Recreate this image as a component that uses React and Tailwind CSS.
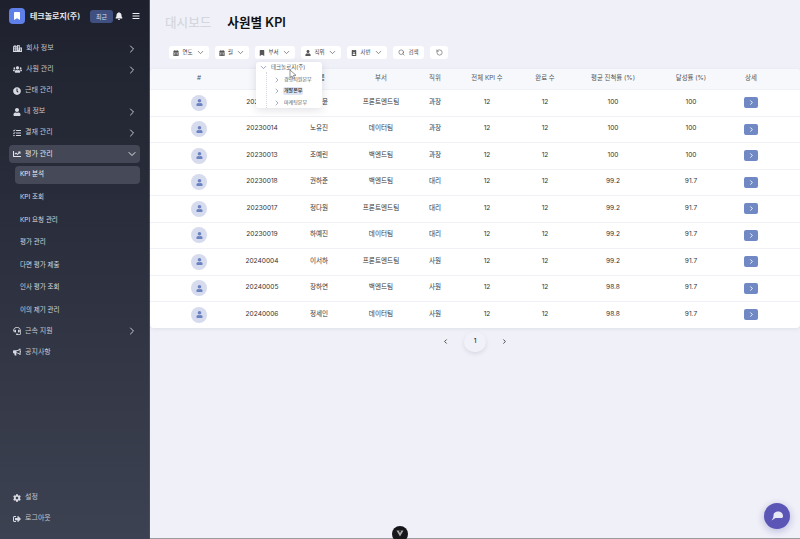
import React from 'react';
import { ChevronDown, ChevronRight, ChevronLeft, RotateCcw, Search } from 'lucide-react';
import {
  FaBell, FaBars, FaBookmark, FaCity, FaUsers, FaClock, FaUser, FaTasks, FaChartLine,
  FaHeadset, FaBullhorn, FaCog, FaSignOutAlt, FaCalendarAlt, FaIdBadge,
} from 'react-icons/fa';

const topMenu = [
  { label: '회사 정보', icon: FaCity, arrow: true, pad: 'gap-[4px]', size: 9 },
  { label: '사원 관리', icon: FaUsers, arrow: true, pad: 'gap-[4px]', size: 9 },
  { label: '근태 관리', icon: FaClock, arrow: false, pad: 'gap-[4px]', size: 8 },
  { label: '내 정보', icon: FaUser, arrow: true, pad: 'gap-[3px]', size: 8 },
  { label: '결재 관리', icon: FaTasks, arrow: true, pad: 'gap-[4px]', size: 8 },
];

const subMenu = ['KPI 분석', 'KPI 조회', 'KPI 요청 관리', '평가 관리', '다면 평가 제출', '인사 평가 조회', '이의 제기 관리'];

const filters = [
  { label: '연도', icon: FaCalendarAlt, width: 'w-10' },
  { label: '월', icon: FaCalendarAlt, width: 'w-[34px]' },
  { label: '부서', icon: FaBookmark, width: 'w-10' },
  { label: '직위', icon: FaUser, width: 'w-10' },
  { label: '사번', icon: FaIdBadge, width: 'w-10' },
];

const rows = [
  ['20230012', '김도윤', '프론트엔드팀', '과장', '12', '12', '100', '100'],
  ['20230014', '노유진', '데이터팀', '과장', '12', '12', '100', '100'],
  ['20230013', '조예린', '백엔드팀', '과장', '12', '12', '100', '100'],
  ['20230018', '권하준', '백엔드팀', '대리', '12', '12', '99.2', '91.7'],
  ['20230017', '정다원', '프론트엔드팀', '대리', '12', '12', '99.2', '91.7'],
  ['20230019', '하예진', '데이터팀', '대리', '12', '12', '99.2', '91.7'],
  ['20240004', '이서하', '프론트엔드팀', '사원', '12', '12', '99.2', '91.7'],
  ['20240005', '장하연', '백엔드팀', '사원', '12', '12', '98.8', '91.7'],
  ['20240006', '정세인', '데이터팀', '사원', '12', '12', '98.8', '91.7'],
];

const headers = ['사번', '이름', '부서', '직위', '전체 KPI 수', '완료 수', '평균 진척률 (%)', '달성률 (%)', '상세'];

const gridCols = 'grid grid-cols-[80px_64px_50px_74px_34px_70px_46px_90px_66px_54px] pr-[22px] items-center';

function MenuRow({ item }) {
  const Icon = item.icon;
  return (
    <div className="h-[21px] flex items-center pl-[13px] pr-[11px]">
      <div className={`flex items-center flex-1 ${item.pad}`}>
        <Icon size={item.size} className="text-[#d8dae2]" />
        <span className="text-[7px] text-[#c3c6d0]">{item.label}</span>
      </div>
      {item.arrow && <ChevronRight size={12} className="text-[#c9ccd6]" />}
    </div>
  );
}

function Sidebar() {
  return (
    <aside className="w-[150px] h-full shrink-0 flex flex-col bg-gradient-to-b from-[#1e212d] to-[#3d4252] border-r border-[#4a4e5c]">
      <div className="h-[38px] pt-2 pl-[9px] flex items-start">
        <div className="w-4 h-4 rounded-[4px] bg-[#5f80e8] flex items-center justify-center">
          <FaBookmark size={8} className="text-white" />
        </div>
        <span className="ml-[5px] w-[60px] whitespace-nowrap text-[8px] leading-4 font-semibold text-[#e6e7ec]">테크놀로지(주)</span>
        <span className="mt-[2px] w-[23px] h-[13px] rounded-[3px] bg-[#3f5080] text-[6px] leading-[13px] text-center text-[#d8dcea]">최근</span>
        <FaBell size={8} className="mt-[4px] ml-[2px] text-[#eceef3]" />
        <FaBars size={8} className="ml-[9px] mt-[4px] text-[#eceef3]" />
      </div>
      {topMenu.map(item => <MenuRow key={item.label} item={item} />)}
      <div className="mx-[9px] mt-[2px] h-[18px] rounded-[4px] bg-[#434756] flex items-center pl-1 pr-[2px]">
        <FaChartLine size={8} className="text-[#e4e6ec]" />
        <span className="ml-[4px] flex-1 text-[7px] text-[#e4e6ec]">평가 관리</span>
        <ChevronDown size={12} className="text-[#e4e6ec]" />
      </div>
      <div className="mt-[3px] -mb-[2px] mx-[9px] flex flex-col">
        {subMenu.map((label, i) => (
          <div
            key={label}
            className={`ml-[6px] pl-[5px] flex items-center text-[6.5px] text-[#d5d7df] ${i === 0 ? 'h-[18px] mb-[2.7px] rounded-[4px] bg-[#454958] text-[#eceef2]' : 'h-[22.6px]'}`}
          >
            {label}
          </div>
        ))}
      </div>
      <MenuRow item={{ label: '근속 지원', icon: FaHeadset, arrow: true, pad: 'gap-[4px]', size: 8 }} />
      <MenuRow item={{ label: '공지사항', icon: FaBullhorn, arrow: false, pad: 'gap-[4px]', size: 8 }} />
      <div className="mt-auto pb-[10px]">
        <MenuRow item={{ label: '설정', icon: FaCog, arrow: false, pad: 'gap-[4px]', size: 8 }} />
        <MenuRow item={{ label: '로그아웃', icon: FaSignOutAlt, arrow: false, pad: 'gap-[4px]', size: 8 }} />
      </div>
    </aside>
  );
}

function Filters() {
  return (
    <div className="flex items-center gap-[6px] pl-[19px]">
      {filters.map(f => {
        const Icon = f.icon;
        return (
          <div key={f.label} className={`${f.width} h-[13px] rounded-[3px] bg-white flex items-center justify-center gap-[3px] text-[5.5px] text-[#444]`}>
            <Icon size={6} className="text-[#555]" />
            <span>{f.label}</span>
            <ChevronDown size={9} className="text-[#666]" />
          </div>
        );
      })}
      <div className="w-[31px] h-[13px] rounded-[3px] bg-white flex items-center justify-center gap-[3px] text-[5.5px] text-[#444]">
        <Search size={7} className="text-[#555]" />
        <span>검색</span>
      </div>
      <div className="w-[18px] h-[13px] rounded-[3px] bg-white flex items-center justify-center">
        <RotateCcw size={7} className="text-[#555]" />
      </div>
    </div>
  );
}

function Table() {
  return (
    <div className="mt-[10px] rounded-[4px] bg-white shadow-[0_1px_4px_rgba(90,95,130,0.12)]">
      <div className={`${gridCols} h-5 bg-[#f7f8fb] rounded-t-[4px] text-[6.4px] text-[#555] text-center`}>
        <span className="pl-[18px]">#</span>
        {headers.map(h => <span key={h} className="whitespace-nowrap flex justify-center">{h}</span>)}
      </div>
      {rows.map(r => (
        <div key={r[0]} className={`${gridCols} h-[26.5px] border-t border-[#f0f1f6] text-[6.6px] text-[#333] text-center`}>
          <div className="pl-[18px] flex justify-center">
            <div className="w-4 h-4 rounded-full bg-[#d6dbee] flex items-center justify-center">
              <FaUser size={7} className="text-[#6a82c0]" />
            </div>
          </div>
          {r.map((cell, i) => <span key={i} className="whitespace-nowrap flex justify-center">{cell}</span>)}
          <div className="flex justify-center">
            <div className="w-[14px] h-[11px] rounded-[2px] bg-[#7089c4] flex items-center justify-center">
              <ChevronRight size={7} strokeWidth={3} className="text-white" />
            </div>
          </div>
        </div>
      ))}
    </div>
  );
}

function Pagination() {
  return (
    <div className="mt-[4px] flex items-center justify-center text-[#333]">
      <ChevronLeft size={7} strokeWidth={3} />
      <div className="mx-[15px] w-[22px] h-[20px] rounded-full bg-[#f1f2f9] shadow-[0_2px_4px_rgba(90,95,130,0.16)] flex items-center justify-center text-[6.6px] font-medium">1</div>
      <ChevronRight size={7} strokeWidth={3} />
    </div>
  );
}

function DeptDropdown() {
  const children = [
    { label: '경영지원본부', on: false },
    { label: '개발본부', on: true },
    { label: '마케팅본부', on: false },
  ];
  return (
    <div className="absolute left-[106px] top-[62px] w-[66px] h-[46px] rounded-[3px] bg-white shadow-[0_2px_8px_rgba(60,65,100,0.16)] pt-[1px] pl-[3px] text-[5px] text-[#555]">
      <div className="h-[9px] flex items-center gap-[3px]">
        <ChevronDown size={9} className="text-[#7a86a8]" />
        <span className="text-[5.5px]">테크놀로지(주)</span>
      </div>
      <div className="ml-[7px] pt-[2px] border-l border-dotted border-[#d6d8e0] flex flex-col gap-[0.5px]">
        {children.map(c => (
          <div key={c.label} className="h-[11px] flex items-center pl-[6px] gap-[2px]">
            <ChevronRight size={8} className="text-[#7a86a8]" />
            <span className={`px-[1px] rounded-[2px] ${c.on ? 'bg-[#dfe3f2] text-[#333] font-medium' : ''}`}>{c.label}</span>
          </div>
        ))}
      </div>
      <svg className="absolute left-[33px] top-[7px]" width="8" height="11" viewBox="0 0 8 11">
        <path d="M1 1 L1 8.5 L3 7 L4.5 10 L5.8 9.4 L4.4 6.5 L7 6.3 Z" fill="#fff" stroke="#666" strokeWidth="0.7" />
      </svg>
    </div>
  );
}

export default function App() {
  return (
    <div className="relative w-[800px] h-[539px] overflow-hidden flex bg-[#f0f1f8] font-['Inter','Noto_Sans_CJK_KR',sans-serif]">
      <Sidebar />
      <main className="relative flex-1 min-w-0 flex flex-col border-b border-[#9a9aa0]">
        <div className="h-[46px] pt-[13px] pl-[15px] flex items-start gap-4 text-[12.6px] leading-5">
          <span className="text-[#d5d7de] font-medium">대시보드</span>
          <span className="text-[#111] font-semibold">사원별 KPI</span>
        </div>
        <Filters />
        <Table />
        <Pagination />
        <DeptDropdown />
      </main>
      <div className="absolute left-[764px] top-[503px] w-[26px] h-[26px] rounded-full bg-[#5b55b5] shadow-[0_2px_8px_rgba(91,85,181,0.4)] flex items-center justify-center">
        <svg width="14" height="12" viewBox="0 0 14 12">
          <path d="M3.5 5.5 C3.5 2.5 6 1.5 8 1.5 C11 1.5 13 3.5 13 6 C13 7.5 12.5 8 11 8 L5.5 8 L1.5 10.5 C2.5 9 3.5 7.5 3.5 5.5 Z" fill="#e9e8f6" />
        </svg>
      </div>
      <div className="absolute left-[392px] top-[526px] w-4 h-4 rounded-full bg-[#15151a] flex items-start justify-center pt-[4px]">
        <svg width="8" height="7" viewBox="0 0 8 7">
          <path d="M0.5 0.5 L7.5 0.5 L4 6.5 Z" fill="#a8a8a8" />
          <path d="M2.6 0.5 L5.4 0.5 L4 3 Z" fill="#15151a" />
        </svg>
      </div>
    </div>
  );
}
